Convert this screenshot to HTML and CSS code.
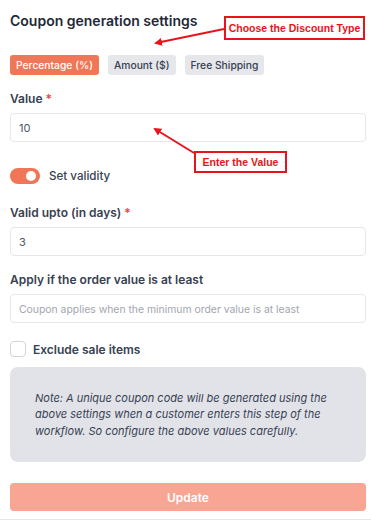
FILE: index.html
```html
<!DOCTYPE html>
<html lang="en">
<head>
    <meta charset="UTF-8">
    <meta name="viewport" content="width=device-width, initial-scale=1.0">
    <title>Coupon generation settings</title>
    <link rel="stylesheet" href="styles.css">
</head>
<body>

<div class="panel">
    <h2 class="title">Coupon generation settings</h2>

    <div class="type-tabs">
        <button class="tab active">Percentage (%)</button>
        <button class="tab">Amount ($)</button>
        <button class="tab">Free Shipping</button>
    </div>

    <label class="field-label">Value <span class="req">*</span></label>
    <input class="field" type="text" value="10">

    <div class="toggle-row">
        <span class="toggle on"><span class="knob"></span></span>
        <span class="toggle-text">Set validity</span>
    </div>

    <label class="field-label">Valid upto (in days) <span class="req">*</span></label>
    <input class="field" type="text" value="3">

    <label class="field-label">Apply if the order value is at least</label>
    <input class="field" type="text" placeholder="Coupon applies when the minimum order value is at least">

    <div class="check-row">
        <span class="checkbox"></span>
        <span class="check-text">Exclude sale items</span>
    </div>

    <div class="note">
        <p>Note: A unique coupon code will be generated using the above settings when a customer enters this step of the workflow. So configure the above values carefully.</p>
    </div>

    <button class="update-btn" disabled>Update</button>

    <!-- annotations -->
    <div class="callout callout-type">Choose the Discount Type</div>
    <div class="callout callout-value">Enter the Value</div>
    <svg class="arrows" width="371" height="200" viewBox="0 0 371 200">
        <defs>
            <marker id="head" markerWidth="8" markerHeight="8" refX="6" refY="4" orient="auto" markerUnits="userSpaceOnUse">
                <path d="M0,0 L8,4 L0,8 Z" fill="#e8141a"/>
            </marker>
        </defs>
        <line x1="224" y1="29" x2="156" y2="43" stroke="#e8141a" stroke-width="2" marker-end="url(#head)"/>
        <line x1="194" y1="153" x2="155" y2="129" stroke="#e8141a" stroke-width="2" marker-end="url(#head)"/>
    </svg>
</div>

</body>
</html>
```

FILE: styles.css
```css
* {
    box-sizing: border-box;
}
body {
    margin: 0;
    font-family: Inter, "Noto Sans", sans-serif;
    background: #fff;
    color: #1f2937;
}
.panel {
    position: relative;
    width: 371px;
    height: 520px;
    padding: 11px 5px 0 10px;
    border-bottom: 1px solid #e5e7eb;
    display: flex;
    flex-direction: column;
    align-items: stretch;
}
.title {
    margin: 0;
    font-size: 14px;
    line-height: 20px;
    font-weight: 600;
    color: #1f2937;
}
.type-tabs {
    display: flex;
    gap: 9px;
    margin-top: 24px;
}
.tab {
    height: 20px;
    padding: 0 6px;
    border: none;
    border-radius: 3px;
    background: #e5e7eb;
    color: #374151;
    font-family: inherit;
    font-size: 10.3px;
    font-weight: 500;
}
.tab.active {
    background: #ef7656;
    color: #fff;
}
.field-label {
    display: block;
    margin-top: 15px;
    font-size: 12px;
    line-height: 18px;
    font-weight: 600;
    color: #374151;
}
.req {
    color: #ef4444;
}
.field {
    width: 100%;
    height: 29px;
    margin-top: 5px;
    padding: 0 8px;
    border: 1px solid #e5e7eb;
    border-radius: 4px;
    font-family: inherit;
    font-size: 11px;
    color: #4b5563;
    outline: none;
}
.field::placeholder {
    font-size: 10.4px;
    color: #a1a6b0;
}
.toggle-row {
    display: flex;
    align-items: center;
    gap: 9px;
    margin-top: 26px;
    margin-bottom: 5px;
}
.toggle {
    position: relative;
    width: 30px;
    height: 16px;
    border-radius: 8px;
    background: #ef7656;
}
.toggle .knob {
    position: absolute;
    top: 3px;
    right: 4px;
    width: 10px;
    height: 10px;
    border-radius: 50%;
    background: #fff;
}
.toggle-text {
    font-size: 11.6px;
    font-weight: 500;
    color: #374151;
}
.check-row {
    display: flex;
    align-items: center;
    gap: 7px;
    margin-top: 18px;
}
.checkbox {
    width: 16px;
    height: 16px;
    border: 1px solid #d1d5db;
    border-radius: 4px;
    background: #fff;
}
.check-text {
    font-size: 12px;
    font-weight: 600;
    color: #374151;
}
.note {
    height: 95px;
    margin-top: 10px;
    padding: 0 20px 0 25px;
    border-radius: 8px;
    background: #e1e3e9;
    display: flex;
    align-items: center;
}
.note p {
    margin: 0;
    font-size: 11px;
    line-height: 16.5px;
    font-style: italic;
    color: #374151;
}
.update-btn {
    height: 28px;
    margin-top: 21px;
    border: none;
    border-radius: 4px;
    background: #f8a593;
    color: #fff;
    font-family: inherit;
    font-size: 12px;
    font-weight: 600;
}
.callout {
    position: absolute;
    background: #fff;
    border: 2px solid #e8141a;
    color: #e8141a;
    font-family: "Liberation Sans", Arial, sans-serif;
    font-size: 10.5px;
    font-weight: bold;
    display: flex;
    align-items: center;
    justify-content: center;
}
.callout-type {
    left: 224px;
    top: 16px;
    width: 141px;
    height: 24px;
}
.callout-value {
    left: 194px;
    top: 151px;
    width: 93px;
    height: 22px;
}
.arrows {
    position: absolute;
    left: 0;
    top: 0;
    pointer-events: none;
}
```
